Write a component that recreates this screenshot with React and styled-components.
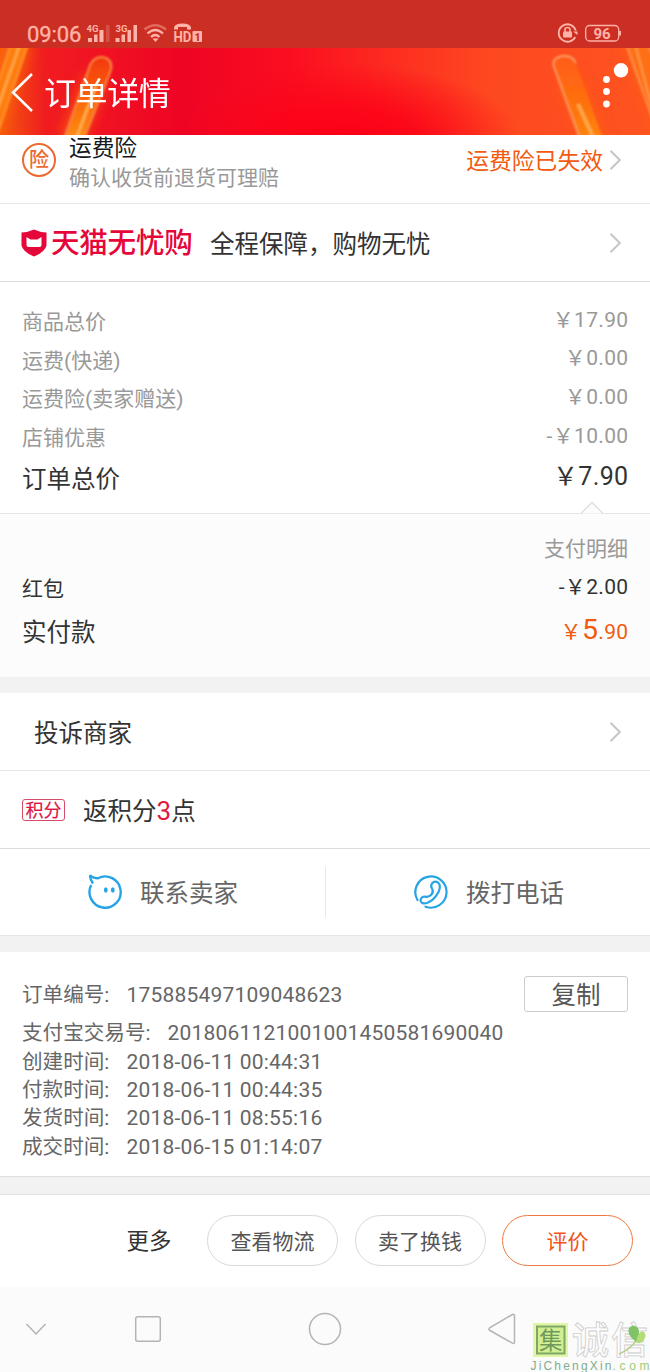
import React from "react";
import styled, { createGlobalStyle } from "styled-components";

const Global = createGlobalStyle`
  * { box-sizing: border-box; }
  body {
    margin: 0;
    background: #fff;
    font-family: Roboto, "Noto Sans CJK SC", sans-serif;
    color: #333;
  }
`;

const Screen = styled.div`
  width: 650px;
  height: 1372px;
  display: flex;
  flex-direction: column;
  overflow: hidden;
  background: #fff;
`;

const StatusBar = styled.div`
  flex: none;
  height: 48px;
  padding: 20px 28px 0 27px;
  display: flex;
  justify-content: space-between;
  background: #cb2e22;
  color: #ffb3a8;
`;

const StatusGroup = styled.div`
  display: flex;
  align-items: center;
  height: 27px;
`;

const Clock = styled.span`
  font-size: 22px;
  line-height: 27px;
  width: 59px;
  padding-top: 1px;
  letter-spacing: -0.1px;
  -webkit-text-stroke: 0.35px currentColor;
`;

const StatusIcons = styled.svg`
  display: block;
  font-family: Roboto, sans-serif;
`;

const Header = styled.header`
  flex: none;
  position: relative;
  height: 87px;
  display: flex;
  align-items: center;
  color: #fff;
  overflow: hidden;
`;

const HeaderArt = styled.svg`
  position: absolute;
  inset: 0;
`;

const HeaderContent = styled.div`
  position: relative;
  width: 100%;
  height: 100%;
  display: flex;
  align-items: center;
  padding: 0 21px 0 11px;
`;

const Title = styled.h1`
  margin: 4px 0 0 10px;
  flex: 1;
  font-size: 32px;
  line-height: 40px;
  font-weight: 400;
  letter-spacing: -0.4px;
`;

const Row = styled.div`
  flex: none;
  height: ${(p) => p.$h || 78}px;
  padding: 0 28px 0 ${(p) => p.$left || 21}px;
  display: flex;
  align-items: center;
  border-bottom: 1px solid ${(p) => p.$line || "#dcdcdc"};
`;

const RowText = styled.div`
  flex: 1;
  font-size: 24.5px;
  line-height: 32px;
  margin-left: ${(p) => p.$gap || 0}px;
  padding-top: ${(p) => p.$drop || 0}px;
`;

const Accent = styled.span`
  color: #e0193f;
  font-size: 26px;
`;

const InsuranceBadge = styled.div`
  width: 34px;
  height: 34px;
  margin: -19px 13px 0 1px;
  border: 2px solid #ea6a32;
  border-radius: 50%;
  color: #ea6a32;
  font-size: 20px;
  font-weight: 500;
  line-height: 31px;
  text-align: center;
`;

const InsuranceCopy = styled.div`
  flex: 1;
  align-self: flex-start;
  padding-top: 1px;
`;

const InsuranceName = styled.div`
  font-size: 22.7px;
  line-height: 26px;
  color: #16191c;
`;

const InsuranceNote = styled.div`
  font-size: 21px;
  line-height: 28px;
  margin-top: 2px;
  color: #999;
`;

const InsuranceState = styled.div`
  font-size: 22.8px;
  line-height: 30px;
  margin: -14px 6px 0 0;
  color: #f25a10;
`;

const Arrow = styled.svg`
  display: block;
  margin-top: ${(p) => p.$shift || 0}px;
`;

const Brand = styled.span`
  color: #e5063a;
  font-size: 28.6px;
  line-height: 36px;
  font-weight: 500;
  letter-spacing: -0.3px;
  margin: 0 0 0 4px;
  padding-top: 1px;
  width: 142px;
  white-space: nowrap;
`;

const Prices = styled.section`
  flex: none;
  height: 232px;
  padding: 20px 22px 0;
  border-bottom: 1px solid #e6e6e6;
`;

const Payment = styled.section`
  position: relative;
  flex: none;
  height: 163px;
  padding: 16px 22px 0;
  background: #fcfcfc;
`;

const Notch = styled.svg`
  position: absolute;
  top: -13px;
  left: 580px;
`;

const PriceLine = styled.div`
  display: flex;
  justify-content: ${(p) => (p.$end ? "flex-end" : "space-between")};
  height: ${(p) => p.$h || 38.6}px;
  align-items: center;
  font-size: ${(p) => p.$size || 21}px;
  color: ${(p) => p.$color || "#999"};
  line-height: 32px;
`;

const PriceLabel = styled.span`
  padding-top: 2px;
`;

const PriceValue = styled.span`
  padding-bottom: 3px;
  letter-spacing: 0.35px;
  margin-right: -0.5px;
  font-size: ${(p) => p.$size || 21}px;
  color: ${(p) => p.$color || "inherit"};
`;

const Big = styled.span`
  font-size: 28.5px;
`;

const Divider = styled.div`
  flex: none;
  height: ${(p) => p.$h || 16}px;
  background: #f2f2f2;
  border-bottom: ${(p) => (p.$line ? "1px solid #e0e0e0" : "none")};
`;

const PointsTag = styled.span`
  width: 43px;
  height: 22px;
  margin: 0 0 0 1px;
  border: 1px solid #d94b6b;
  border-radius: 3px;
  color: #dc1644;
  font-size: 18px;
  line-height: 21px;
  -webkit-text-stroke: 0.2px currentColor;
  text-align: center;
  white-space: nowrap;
`;

const Contacts = styled.div`
  flex: none;
  height: 87px;
  display: grid;
  grid-template-columns: 326px 324px;
  align-items: center;
  border-bottom: 1px solid #e6e6e6;
`;

const Contact = styled.div`
  height: 50px;
  display: flex;
  align-items: center;
  gap: 17px;
  padding-left: 87px;
  border-right: ${(p) => (p.$line ? "1px solid #e8e8e8" : "none")};
`;

const ContactText = styled.span`
  padding-top: 3px;
  font-size: 24.5px;
  line-height: 32px;
  color: #666;
`;

const OrderInfo = styled.section`
  flex: none;
  height: 225px;
  padding: 24px 22px 0;
  border-bottom: 1px solid #dedede;
  color: #666;
`;

const InfoLine = styled.div`
  height: ${(p) => p.$h || 28.3}px;
  display: flex;
  align-items: center;
  font-size: 20.6px;
  line-height: 28px;
  white-space: nowrap;
`;

const InfoTimes = styled.div`
  margin-top: -5px;
`;

const InfoLabel = styled.span`
  margin-right: 17px;
`;

const InfoValue = styled.span`
  flex: 1;
  font-size: 21px;
  letter-spacing: 0.2px;
`;

const CopyButton = styled.button`
  width: 104px;
  height: 36px;
  margin-bottom: 1px;
  padding: 0;
  border: 1px solid #ccc;
  border-radius: 3px;
  background: #fff;
  color: #555;
  font: inherit;
  font-size: 24.5px;
  line-height: 37px;
`;

const Actions = styled.div`
  flex: none;
  height: 92px;
  display: flex;
  align-items: center;
  justify-content: flex-end;
  gap: 17px;
  padding: 0 17px 2px 0;
`;

const More = styled.span`
  font-size: 22.5px;
  line-height: 30px;
  margin-right: 19px;
  padding-top: 2px;
`;

const Pill = styled.button`
  width: 131px;
  height: 51px;
  margin-left: -0.5px;
  padding: 0;
  border: 1px solid ${(p) => (p.$primary ? "#ee7a42" : "#d9d9d9")};
  border-radius: 26px;
  background: #fff;
  color: ${(p) => (p.$primary ? "#f25316" : "#555")};
  font: inherit;
  font-size: 21px;
  line-height: 52px;
`;

const NavBar = styled.nav`
  position: relative;
  flex: 1;
  background: #fbfbfb;
`;

const NavIcons = styled.svg`
  display: block;
`;

const Watermark = styled.svg`
  position: absolute;
  right: 0;
  bottom: 0;
  font-family: "Noto Sans CJK SC", sans-serif;
`;

const Chevron = ({ shift }) => (
  <Arrow $shift={shift} width="13" height="22" viewBox="0 0 13 22" fill="none" stroke="#c6c6c6" strokeWidth="2">
    <path d="M1.5 1.8 10.8 11 1.5 20.2" />
  </Arrow>
);

const priceRows = [
  ["商品总价", "￥17.90"],
  ["运费(快递)", "￥0.00"],
  ["运费险(卖家赠送)", "￥0.00"],
  ["店铺优惠", "-￥10.00"],
];

const timeRows = [
  ["创建时间:", "2018-06-11 00:44:31"],
  ["付款时间:", "2018-06-11 00:44:35"],
  ["发货时间:", "2018-06-11 08:55:16"],
  ["成交时间:", "2018-06-15 01:14:07"],
];

function HeaderBackground() {
  return (
    <HeaderArt width="650" height="87" viewBox="0 0 650 87">
      <defs>
        <linearGradient id="base" x1="0" y1="0" x2="1" y2="0">
          <stop offset="0" stopColor="#f45a0c" />
          <stop offset="0.07" stopColor="#f01c20" />
          <stop offset="0.16" stopColor="#f01222" />
          <stop offset="0.28" stopColor="#ee0424" />
          <stop offset="0.45" stopColor="#fb0e20" />
          <stop offset="0.6" stopColor="#fd2c20" />
          <stop offset="0.75" stopColor="#fe4820" />
          <stop offset="1" stopColor="#fe5420" />
        </linearGradient>
        <radialGradient id="deep" cx="0.5" cy="0.5" r="0.5">
          <stop offset="0" stopColor="#fc0018" />
          <stop offset="0.4" stopColor="#fc0018" stopOpacity="0.8" />
          <stop offset="1" stopColor="#fc0018" stopOpacity="0" />
        </radialGradient>
        <filter id="glow" x="-100%" y="-30%" width="300%" height="160%">
          <feGaussianBlur stdDeviation="7" />
        </filter>
        <filter id="soft" x="-20%" y="-20%" width="140%" height="140%">
          <feGaussianBlur stdDeviation="0.8" />
        </filter>
        <linearGradient id="tubeLeft" x1="0" y1="0" x2="0" y2="1">
          <stop offset="0" stopColor="#f2380f" />
          <stop offset="0.6" stopColor="#fb6e0c" />
          <stop offset="1" stopColor="#ff8c14" />
        </linearGradient>
        <linearGradient id="tubeRight" x1="0" y1="0" x2="0" y2="1">
          <stop offset="0" stopColor="#ff5c1a" />
          <stop offset="0.6" stopColor="#ff720c" />
          <stop offset="1" stopColor="#ff8412" />
        </linearGradient>
      </defs>
      <rect width="650" height="87" fill="url(#base)" />
      <ellipse cx="350" cy="90" rx="170" ry="75" fill="url(#deep)" />
      <g filter="url(#glow)" fill="none" stroke="#ff6a10" strokeWidth="22">
        <path d="M96 30 70 95" opacity="0.75" />
        <path d="M18-8-12 80" />
        <path d="M568 28 596 95" opacity="0.45" />
        <path d="M634-5 670 90" opacity="0.5" />
      </g>
      <g filter="url(#soft)" fill="none" strokeWidth="2">
        <path d="M64 91 90 17q4-9 13-8 10 2 8 13L84 91z" fill="url(#tubeLeft)" stroke="#fb8440" />
        <path d="M76 91 96 38" stroke="#ffae4c" strokeWidth="3" />
        <path d="M-10 60 11-4H28L-4 90z" fill="#ff7c0a" stroke="#ff9230" />
        <path d="M-3 62 20-4" stroke="#ffa644" strokeWidth="3" />
        <path d="M580 91 554 19q-3-8 7-11 11-2 15 7l27 76z" fill="url(#tubeRight)" />
        <path d="M580 91 554 19q-3-8 7-11 11-2 15 7" stroke="#ff9a5c" />
        <path d="M594 91 578 56" stroke="#ffab48" strokeWidth="3.500" />
        <path d="M660 92 626-4H648L660 26z" fill="#ff7018" stroke="#ff9044" />
        <path d="M655 70 635-4" stroke="#ff9a48" strokeWidth="2" />
      </g>
    </HeaderArt>
  );
}

function LeftStatus() {
  return (
    <StatusIcons width="120" height="27" viewBox="86 20 120 27" fill="#ffb3a8">
      <text x="86.500" y="31.500" fontSize="9.500" fontWeight="700">4G</text>
      <path d="M88 38h4v4h-4zM94 34.500h3.500v7.500h-3.500zM99.500 30h4v12h-4z" />
      <path d="M106 25h3.500v17h-3.500z" opacity="0.25" />
      <text x="115.500" y="31.500" fontSize="9.500" fontWeight="700">3G</text>
      <path d="M115.500 38h4v4h-4zM121.500 34.500h3.500v7.500h-3.500zM127.500 30h3.500v12h-3.500zM133.500 25h3.500v17h-3.500z" />
      <g fill="none" stroke="#ffb3a8" strokeWidth="2.300">
        <path d="M144.500 29.500Q155.200 21 166 29.500" opacity="0.45" />
        <path d="M147.500 33.500Q155.200 26.500 163 33.500" />
        <path d="M151 37Q155.200 33 159.500 37" />
      </g>
      <path d="M152.500 38.500h6L155.500 42z" />
      <path d="M174 29.500V27.500q1-4 8.500-4t8.500 4v2h-4V27h-9v2.500z" />
      <text x="173.500" y="42" fontSize="15.500" fontWeight="700" textLength="18" lengthAdjust="spacingAndGlyphs">HD</text>
      <rect x="192.500" y="31" width="9.500" height="11" rx="1" />
      <text x="194.500" y="40.500" fontSize="10.500" fontWeight="900" fill="#cb2e22">1</text>
    </StatusIcons>
  );
}

function RightStatus() {
  return (
    <StatusIcons width="65" height="27" viewBox="557 20 65 27" fill="#ffb3a8">
      <path d="M575.200 37A8.700 8.700 0 1 1 575.800 30.500" fill="none" stroke="#ffb3a8" strokeWidth="1.800" />
      <path d="M573 31.500h4.500v3.500z" />
      <rect x="563" y="31.500" width="9" height="6" rx="0.800" />
      <path d="M565 32v-2.500q0-2 2.500-2t2.500 2V32" fill="none" stroke="#ffb3a8" strokeWidth="1.600" />
      <rect x="585.700" y="25.500" width="33" height="15.500" rx="4" fill="none" stroke="#ffb3a8" strokeWidth="1.300" />
      <path d="M619 31h2v4.500h-2z" />
      <text x="602" y="38.700" fontSize="15" fontWeight="700" textAnchor="middle">96</text>
    </StatusIcons>
  );
}

export default function App() {
  return (
    <Screen>
      <Global />
      <StatusBar>
        <StatusGroup>
          <Clock>09:06</Clock>
          <LeftStatus />
        </StatusGroup>
        <StatusGroup>
          <RightStatus />
        </StatusGroup>
      </StatusBar>

      <Header>
        <HeaderBackground />
        <HeaderContent>
          <svg width="23" height="40" viewBox="0 0 23 40" fill="none" stroke="#fff" strokeWidth="2.500">
            <path d="M21 2 2 20.500 21 39" />
          </svg>
          <Title>订单详情</Title>
          <svg width="30" height="62" viewBox="0 0 30 62" fill="#fff">
            <circle cx="7.500" cy="18.500" r="3.400" />
            <circle cx="7.500" cy="30.500" r="3.400" />
            <circle cx="7.500" cy="43" r="3.400" />
            <circle cx="22" cy="9.300" r="7.200" />
          </svg>
        </HeaderContent>
      </Header>

      <Row $h={69} $line="#e8e8e8">
        <InsuranceBadge>险</InsuranceBadge>
        <InsuranceCopy>
          <InsuranceName>运费险</InsuranceName>
          <InsuranceNote>确认收货前退货可理赔</InsuranceNote>
        </InsuranceCopy>
        <InsuranceState>运费险已失效</InsuranceState>
        <Chevron shift={-18} />
      </Row>

      <Row>
        <svg width="26" height="28" viewBox="0 0 26 28">
          <path d="M13 .5Q18 3 25.500 3.500v13Q24 23 13 27.500 2 23 .5 16.500V3.500Q8 3 13 .5z" fill="#e5063a" />
          <path d="M5.500 8 9.500 10.500h7l4-2.500v8q0 2-2 2h-11q-2 0-2-2z" fill="#fff" />
        </svg>
        <Brand>天猫无忧购</Brand>
        <RowText $gap={17} $drop={5}>全程保障，购物无忧</RowText>
        <Chevron />
      </Row>

      <Prices>
        {priceRows.map(([label, value]) => (
          <PriceLine key={label}>
            <PriceLabel>{label}</PriceLabel>
            <PriceValue>{value}</PriceValue>
          </PriceLine>
        ))}
        <PriceLine $h={44.5} $size={24.5} $color="#333">
          <PriceLabel>订单总价</PriceLabel>
          <PriceValue $size={25}>￥7.90</PriceValue>
        </PriceLine>
      </Prices>

      <Payment>
        <Notch width="24" height="14" viewBox="0 0 24 14" fill="#fcfcfc" stroke="#dedede" strokeWidth="1.300">
          <path d="M1 12.500 12 1.500 23 12.500" />
        </Notch>
        <PriceLine $end $h={36}>
          <PriceLabel>支付明细</PriceLabel>
        </PriceLine>
        <PriceLine $h={44} $color="#333">
          <PriceLabel>红包</PriceLabel>
          <PriceValue>-￥2.00</PriceValue>
        </PriceLine>
        <PriceLine $h={44} $size={24.5} $color="#333">
          <PriceLabel>实付款</PriceLabel>
          <PriceValue $color="#f25a10">
            ￥<Big>5</Big>.90
          </PriceValue>
        </PriceLine>
      </Payment>

      <Divider />

      <Row $left={34} $line="#e8e8e8">
        <RowText $drop={5}>投诉商家</RowText>
        <Chevron />
      </Row>
      <Row>
        <PointsTag>积分</PointsTag>
        <RowText $gap={18} $drop={4}>
          返积分<Accent>3</Accent>点
        </RowText>
      </Row>

      <Contacts>
        <Contact $line>
          <svg width="36" height="36" viewBox="0 0 36 36" fill="none" stroke="#27a4e6" strokeWidth="2.400" strokeLinejoin="round">
            <path d="M4.200 11A15.600 15.600 0 1 0 11 4.200Q7 4.500 3.300 1.800 2.700 5 6 9.500" />
            <ellipse cx="18.800" cy="16" rx="1.900" ry="2.700" fill="#27a4e6" stroke="none" />
            <ellipse cx="25.800" cy="16" rx="1.900" ry="2.700" fill="#27a4e6" stroke="none" />
          </svg>
          <ContactText>联系卖家</ContactText>
        </Contact>
        <Contact>
          <svg width="36" height="36" viewBox="0 0 36 36" fill="none" stroke="#27a4e6" strokeWidth="2.200" strokeLinecap="round">
            <path d="M4.500 26A15.600 15.600 0 1 1 12.500 32.700" />
            <path d="M19 9.500Q21.500 6.500 25 8.500 28.500 11.500 25.500 18 21 26.500 14 29 8.500 30.500 7.500 26.500 8 22.500 12 22.500 15 24 18.500 20.500 21 17.500 19 14.500 17.300 12 19 9.500z" />
          </svg>
          <ContactText>拨打电话</ContactText>
        </Contact>
      </Contacts>

      <Divider />

      <OrderInfo>
        <InfoLine $h={37}>
          <InfoLabel>订单编号:</InfoLabel>
          <InfoValue>175885497109048623</InfoValue>
          <CopyButton>复制</CopyButton>
        </InfoLine>
        <InfoLine $h={39.5}>
          <InfoLabel>支付宝交易号:</InfoLabel>
          <InfoValue>2018061121001001450581690040</InfoValue>
        </InfoLine>
        <InfoTimes>
          {timeRows.map(([label, value]) => (
            <InfoLine key={label}>
              <InfoLabel>{label}</InfoLabel>
              <InfoValue>{value}</InfoValue>
            </InfoLine>
          ))}
        </InfoTimes>
      </OrderInfo>

      <Divider $h={18} $line />

      <Actions>
        <More>更多</More>
        <Pill>查看物流</Pill>
        <Pill>卖了换钱</Pill>
        <Pill $primary>评价</Pill>
      </Actions>

      <NavBar>
        <NavIcons width="530" height="85" viewBox="0 0 530 85" fill="none" stroke="#b4b4b4" strokeWidth="1.500">
          <path d="M26.500 37 36 47 45.500 37" />
          <rect x="135.700" y="29.700" width="24.600" height="24.600" rx="2" />
          <circle cx="325" cy="42" r="15.500" />
          <path d="M512.500 27.500q2-.8 2 1.500v26q0 2.200-2 1.200L490 43.500q-2.200-1.300 0-2.800z" />
        </NavIcons>
        <Watermark width="124" height="64" viewBox="526 1308 124 64">
          <rect x="533" y="1323" width="35" height="34" fill="#e3f6a8" />
          <rect x="537" y="1326.500" width="27.500" height="27" fill="#d2ee92" stroke="#7fa865" strokeWidth="2" />
          <text x="539" y="1349" fontSize="23.500" fill="#6f9a5c">集</text>
          <text x="572" y="1354" fontSize="37" letterSpacing="2" fontWeight="500" fill="#fdfdfd" stroke="#cdcdcd" strokeWidth="0.800">诚信</text>
          <path d="M619 1354Q629 1350 636 1341" fill="none" stroke="#b8d08c" strokeWidth="1.500" />
          <path d="M636 1342Q626 1334 629 1328 633 1323 638 1328 641 1334 636 1342z" fill="#7fc267" />
          <path d="M636 1342Q638 1331 643 1331 648 1335 643 1341 639 1345 636 1342z" fill="#b3dc78" />
          <text x="530.500" y="1370" fontSize="12" fontFamily="Liberation Sans, sans-serif" fill="#7fae8d" textLength="81" lengthAdjust="spacing">JiChengXin</text>
          <text x="612.500" y="1370" fontSize="12" fontFamily="Liberation Sans, sans-serif" fill="#9ccb74" textLength="37" lengthAdjust="spacing">.com</text>
        </Watermark>
      </NavBar>
    </Screen>
  );
}
